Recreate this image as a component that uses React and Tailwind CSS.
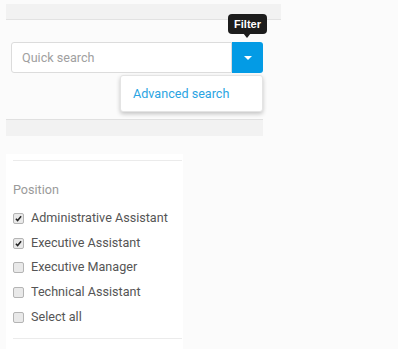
import { Fragment } from 'react';

const positions = [
  { label: 'Administrative Assistant', checked: true },
  { label: 'Executive Assistant', checked: true },
  { label: 'Executive Manager', checked: false },
  { label: 'Technical Assistant', checked: false },
  { label: 'Select all', checked: false },
];

function Box({ checked }) {
  return (
    <span className="w-[11px] h-[11px] rounded-[2px] border border-[#b4b4b4] bg-[#e9e9e9] flex items-center justify-center shrink-0">
      {checked && (
        <svg width="7" height="7" viewBox="0 0 8 8">
          <path d="M1 4.2 L3 6.3 L7 1.5" fill="none" stroke="#222" strokeWidth="1.7" />
        </svg>
      )}
    </span>
  );
}

export default function App() {
  return (
    <div className="w-[398px] h-[349px] overflow-hidden bg-[#fbfbfb] text-[12.6px] font-['Roboto',sans-serif] relative">
      <div className="pt-[4px] pl-[6px]">
        <div className="w-[275px] h-[16px] bg-[#f2f2f2] border-b border-[#e2e2e2]" />

        <div className="w-[257px] h-[99px] pl-[5px] pt-[22px] relative">
          <div className="flex h-[31px]">
            <div className="flex-1 bg-white border border-[#dcdcdc] rounded-l-[3px] flex items-center pl-[10px] pt-[2px] text-[#a0a0a0]">
              Quick search
            </div>
            <div className="w-[31px] bg-[#039be5] rounded-r-[3px] flex items-center justify-center">
              <svg width="8" height="4" viewBox="0 0 8 4">
                <path d="M0 0 L8 0 L4 4 Z" fill="#fff" />
              </svg>
            </div>
          </div>

          <div className="absolute left-[114px] top-[55px] w-[143px] h-[37px] bg-white border border-[#e4e4e4] rounded-[3px] shadow-[0_2px_4px_rgba(0,0,0,0.22)] flex items-center pl-[12px] pt-[2px] text-[#2aa4e2]">
            Advanced search
          </div>
        </div>

        <div className="w-[257px] h-[17px] bg-[#f2f2f2] border-t border-[#e0e0e0]" />

        <div className="mt-[18px] w-[177px] h-[200px] bg-white pl-[7px] pt-[6px]">
          <div className="w-[169px] border-t border-[#ebebeb]" />
          <div className="pt-[21px] text-[#9a9a9a] leading-[16px]">Position</div>
          <div className="pt-[8px]">
            {positions.map((p) => (
              <Fragment key={p.label}>
                <div className="h-[24.75px] flex items-center gap-[7px] text-[#555]">
                  <Box checked={p.checked} />
                  <span>{p.label}</span>
                </div>
              </Fragment>
            ))}
          </div>
          <div className="mt-[8px] w-[169px] border-t border-[#ebebeb]" />
        </div>
      </div>

      <div className="absolute left-[228px] top-[14px] w-[39px] h-[20px] bg-[#1c1c1c] rounded-[4px] flex items-center justify-center text-white text-[11px] font-bold font-['Liberation_Sans',sans-serif]">
        Filter
        <span className="absolute left-[15px] top-[19px] w-0 h-0 border-l-[4px] border-r-[4px] border-t-[5px] border-l-transparent border-r-transparent border-t-[#1c1c1c]" />
      </div>
    </div>
  );
}
